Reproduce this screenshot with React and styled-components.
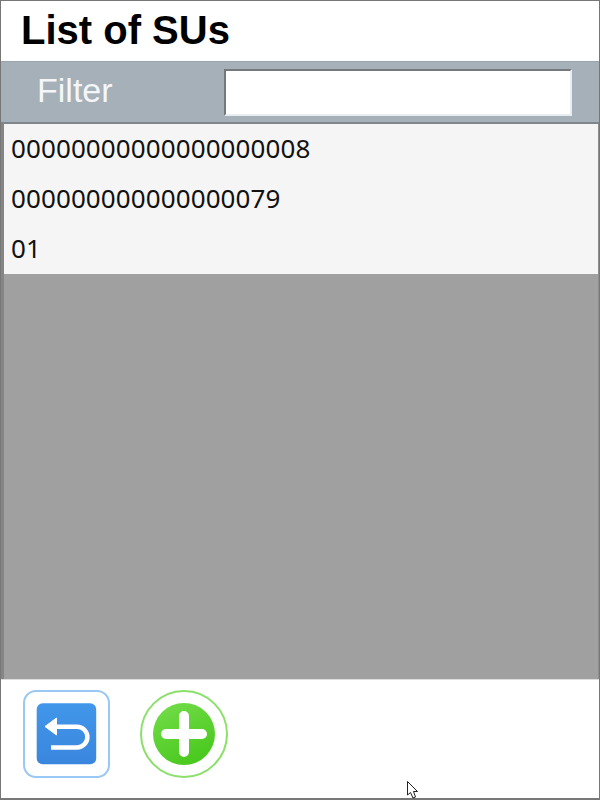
import React from "react";
import styled, { createGlobalStyle } from "styled-components";

const GlobalStyles = createGlobalStyle`
  * {
    box-sizing: border-box;
  }
  html,
  body {
    margin: 0;
    padding: 0;
    background: #fff;
  }
`;

const Screen = styled.div`
  position: relative;
  width: 600px;
  height: 800px;
  display: flex;
  flex-direction: column;
  border: 1px solid #777;
  border-bottom-width: 2px;
  background: #fff;
  font-family: "Liberation Sans", Arial, sans-serif;
`;
const Header = styled.div`
  height: 60px;
  display: flex;
  align-items: center;
  padding: 0 0 2px 20px;
  h1 {
    margin: 0;
    font-size: 40px;
    font-weight: bold;
    color: #000;
  }
`;
const FilterBar = styled.div`
  height: 63px;
  display: flex;
  align-items: center;
  justify-content: space-between;
  padding: 0 27px 0 36px;
  background: #a5b0b9;
  border-top: 1px solid #9aa5ae;
  border-bottom: 2px solid #7f868c;
  label {
    font-size: 34px;
    color: #f4f6f8;
    margin-top: -3px;
  }
`;
const FilterInput = styled.input`
  width: 348px;
  height: 47px;
  padding: 0 6px;
  background: #fff;
  border-style: solid;
  border-width: 2px;
  border-color: #74797d #e9edf0 #e9edf0 #74797d;
  outline: none;
`;
const ListArea = styled.div`
  flex: 1;
  background: #a0a0a0;
  border-left: 3px solid #858585;
  border-right: 1px solid #8e8e8e;
`;
const Row = styled.div`
  height: 50px;
  display: flex;
  align-items: center;
  padding: 0 0 2px 7px;
  background: #f5f5f5;
  font-family: "Noto Sans", Tahoma, sans-serif;
  font-size: 26px;
  letter-spacing: 0.1px;
  color: #111;
`;
const Footer = styled.div`
  height: 119px;
  display: flex;
  align-items: flex-start;
  gap: 30px;
  padding: 10px 0 0 22px;
  background: #fff;
  border-top: 1px solid #ddd;
`;
const IconButton = styled.button`
  width: ${(p) => p.$size}px;
  height: 88px;
  display: flex;
  align-items: center;
  justify-content: center;
  padding: 0;
  background: #fff;
  border: none;
  svg {
    display: block;
  }
`;
const Cursor = styled.svg`
  position: absolute;
  left: 405px;
  top: 779px;
`;

const BackIcon = () => (
  <svg width="87" height="88" viewBox="0 0 87 88">
    <defs>
      <linearGradient id="blue" x1="0" y1="0" x2="0" y2="1">
        <stop offset="0" stopColor="#4197ea" />
        <stop offset="1" stopColor="#3a86de" />
      </linearGradient>
    </defs>
    <rect x="1" y="1" width="85" height="86" rx="12" fill="#fff" stroke="#98c8f3" strokeWidth="2" />
    <rect x="13.7" y="13.3" width="59.5" height="61" rx="6" fill="url(#blue)" />
    <path
      d="M32 36.7H54a10.4 10.4 0 0 1 0 20.8H28"
      fill="none"
      stroke="#fff"
      strokeWidth="4.5"
    />
    <path d="M33.5 28V45L22 36.5Z" fill="#fff" stroke="#fff" strokeWidth="1" strokeLinejoin="round" />
  </svg>
);

const AddIcon = () => (
  <svg width="88" height="88" viewBox="0 0 88 88">
    <defs>
      <linearGradient id="green" x1="0.2" y1="0" x2="0.7" y2="1">
        <stop offset="0" stopColor="#72dc48" />
        <stop offset="1" stopColor="#47c81c" />
      </linearGradient>
    </defs>
    <circle cx="44" cy="44" r="43" fill="#fff" stroke="#8ae06a" strokeWidth="2" />
    <circle cx="44" cy="44" r="31" fill="url(#green)" />
    <path d="M44 26V62M26 44H62" stroke="#fff" strokeWidth="10" strokeLinecap="round" />
  </svg>
);

const items = ["00000000000000000008", "000000000000000079", "01"];

const App = () => {
  return (
    <>
      <GlobalStyles />
      <Screen>
        <Header>
          <h1>List of SUs</h1>
        </Header>
        <FilterBar>
          <label>Filter</label>
          <FilterInput type="text" />
        </FilterBar>
        <ListArea>
          {items.map((item) => (
            <Row key={item}>{item}</Row>
          ))}
        </ListArea>
        <Footer>
          <IconButton $size={87}>
            <BackIcon />
          </IconButton>
          <IconButton $size={88}>
            <AddIcon />
          </IconButton>
        </Footer>
        <Cursor width="14" height="20" viewBox="0 0 14 20">
          <path d="M1.5 1.5V15L4.5 12.5L7 18L9.5 17L7.5 11.5H11.5Z" fill="#fff" stroke="#222" strokeWidth="1" />
        </Cursor>
      </Screen>
    </>
  );
};

export default App;
